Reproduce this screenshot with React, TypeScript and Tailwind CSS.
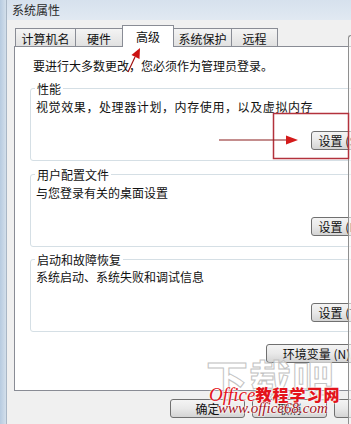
import React from 'react';

const cjk = "font-['Noto_Sans_CJK_SC','Noto_Sans',sans-serif]";

const Btn: React.FC<{ label: string; w?: string }> = ({ label, w = 'w-[67px]' }) => (
  <div
    className={`${w} h-[19px] shrink-0 flex items-center justify-center rounded-[3px] border border-[#707070] bg-gradient-to-b from-[#f4f4f4] via-[#e9e9e9] to-[#d4d4d4] text-[12px] leading-[16px] text-[#111] whitespace-nowrap overflow-hidden`}
  >
    {label}
  </div>
);

const Group: React.FC<{ title: string; desc: string; btn: string; cls: string; descCls?: string; btnCls: string; pb: string }> = ({
  title,
  desc,
  btn,
  cls,
  descCls = 'mt-[2px]',
  btnCls,
  pb,
}) => (
  <div className={`${cls} ml-[15px] w-[355px] rounded-[3px] border border-[#d5dfe5] ${pb}`}>
    <div className="-mt-[8px] ml-[4px] w-fit bg-white px-[2px] text-[12px] leading-[16px]">{title}</div>
    <div className={`${descCls} pl-[5px] text-[12px] leading-[16px]`}>{desc}</div>
    <div className={`${btnCls} flex justify-end pr-[6px]`}>
      <Btn label={btn} />
    </div>
  </div>
);

const tabs = [
  { label: '计算机名', w: 'w-[61px]' },
  { label: '硬件', w: 'w-[48px]' },
  { label: '高级', w: 'w-[52px]', active: true },
  { label: '系统保护', w: 'w-[59px]' },
  { label: '远程', w: 'w-[47px]' },
];

export default function App() {
  return (
    <div className={`relative w-[351px] h-[424px] overflow-hidden flex bg-[#f0f0f0] text-[#111] ${cjk}`}>
      {/* window frame */}
      <div className="w-[7px] shrink-0 bg-gradient-to-r from-[#b7cbe0] to-[#d3dfeb] border-r border-[#a9b7c6]" />

      <div className="flex flex-col flex-1 min-w-0">
        <div className="h-[20px] shrink-0 bg-gradient-to-b from-[#d6e1ed] to-[#e1e9f2] pl-[5px] text-[12px] leading-[20px] text-[#2a2a2a]">
          系统属性
        </div>

        {/* tabs */}
        <div className="pt-[5px] pl-[8px] flex items-end h-[27px] -mb-[1px] relative z-10">
          {tabs.map((t, i) =>
            t.active ? (
              <div
                key={t.label}
                className={`${t.w} h-[22px] ${i ? '-ml-[1px]' : ''} relative z-10 border border-b-0 border-[#898c95] bg-white text-center text-[12px] leading-[16px] pt-[3px]`}
              >
                {t.label}
              </div>
            ) : (
              <div
                key={t.label}
                className={`${t.w} h-[18px] mb-[1px] ${i ? '-ml-[1px]' : ''} border border-b-0 border-[#898c95] bg-gradient-to-b from-[#f4f4f4] to-[#e1e1e1] text-center text-[12px] leading-[14px] pt-[3px]`}
              >
                {t.label}
              </div>
            )
          )}
        </div>

        {/* page */}
        <div className="ml-[7px] w-[379px] h-[345px] shrink-0 border border-[#898c95] bg-white flex flex-col">
          <div className="pt-[11px] pl-[18px] text-[12px] leading-[16px]">要进行大多数更改，您必须作为管理员登录。</div>

          <Group
            cls="mt-[14px]"
            title="性能"
            desc="视觉效果，处理器计划，内存使用，以及虚拟内存"
            descCls="mt-[2px] tracking-[0.6px]"
            btn="设置 (S)..."
            btnCls="mt-[16px]"
            pb="pb-[10px]"
          />
          <Group
            cls="mt-[13px]"
            title="用户配置文件"
            desc="与您登录有关的桌面设置"
            btn="设置 (E)..."
            btnCls="mt-[16px]"
            pb="pb-[10px]"
          />
          <Group
            cls="mt-[12px]"
            title="启动和故障恢复"
            desc="系统启动、系统失败和调试信息"
            descCls="mt-[1px]"
            btn="设置 (T)..."
            btnCls="mt-[18px]"
            pb="pb-[9px]"
          />

          <div className="mt-[12px] flex justify-end pr-[15px]">
            <Btn label="环境变量 (N)..." w="w-[111px]" />
          </div>
        </div>

        {/* dialog buttons */}
        <div className="mt-[8px] ml-[163px] flex gap-[7px]">
          <Btn label="确定" w="w-[75px]" />
          <Btn label="取消" w="w-[75px]" />
          <Btn label="应用(A)" w="w-[75px]" />
        </div>
      </div>

      {/* edge of the window behind */}
      <div className="absolute left-[348px] top-[35px] bottom-0 w-[4px] rounded-tl-[3px] border-l border-t border-[#8f8f8f] bg-[#f7f7f7]/60" />

      {/* annotations */}
      <svg className="absolute inset-0 pointer-events-none" width="351" height="424" viewBox="0 0 351 424">
        <rect x="273.5" y="113.5" width="75" height="45" fill="none" stroke="#b3323c" strokeWidth="1.5" />
        <line x1="219" y1="140" x2="288" y2="140" stroke="#8a1c1c" strokeWidth="1.2" />
        <polygon points="286,135.5 298,140 286,144.5" fill="#d41a1a" />
        <line x1="128" y1="72" x2="135" y2="57" stroke="#a01010" strokeWidth="1.2" />
        <polygon points="140,48 139.5,59 131.5,55" fill="#cc1111" />
      </svg>

      {/* watermark */}
      <div className="absolute left-[206px] top-[355px] text-[42px] leading-[46px] font-bold tracking-[1px] text-white/70 [-webkit-text-stroke:1px_#c2c2c2] pointer-events-none">
        下载吧
      </div>
      <div className="absolute left-[209px] top-[384px] flex items-baseline leading-[20px] pointer-events-none [text-shadow:0_0_2px_#fff,0_0_2px_#fff]">
        <span className="font-['Liberation_Serif',serif] italic text-[19px] text-[#e3141c]">Office</span>
        <span className="font-black text-[16px] tracking-[1px] text-[#e3141c]">教程学习网</span>
      </div>
      <div className="absolute left-[218px] top-[400px] font-['Liberation_Serif',serif] italic text-[15px] leading-[17px] text-[#a3121a] pointer-events-none [text-shadow:0_0_2px_#fff,0_0_2px_#fff,0_0_2px_#fff]">
        www.office68.com
      </div>
    </div>
  );
}
